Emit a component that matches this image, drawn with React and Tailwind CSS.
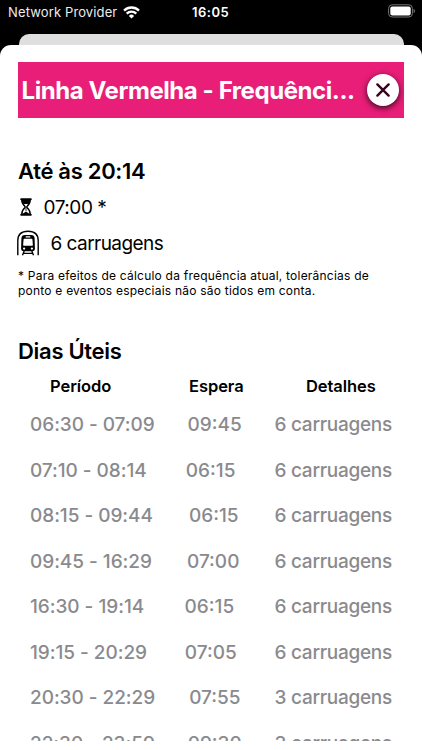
import React from 'react';

const rows = [
  ['06:30 - 07:09', '09:45', '6 carruagens'],
  ['07:10 - 08:14', '06:15', '6 carruagens'],
  ['08:15 - 09:44', '06:15', '6 carruagens'],
  ['09:45 - 16:29', '07:00', '6 carruagens'],
  ['16:30 - 19:14', '06:15', '6 carruagens'],
  ['19:15 - 20:29', '07:05', '6 carruagens'],
  ['20:30 - 22:29', '07:55', '3 carruagens'],
  ['22:30 - 23:59', '09:30', '3 carruagens'],
];

function Wifi() {
  return (
    <svg width="17" height="13" viewBox="0 0 17 13" fill="none" stroke="white" strokeWidth="2.3">
      <path d="M1 4.6A10.6 10.6 0 0 1 16 4.6" />
      <path d="M3.7 7.6A6.8 6.8 0 0 1 13.3 7.6" />
      <path d="M8.5 12.4L5.9 9.9A3.7 3.7 0 0 1 11.1 9.9Z" fill="white" stroke="none" />
    </svg>
  );
}

function Battery() {
  return (
    <svg width="28" height="14" viewBox="0 0 28 14">
      <rect x=".6" y=".8" width="23.8" height="12.2" rx="3.6" fill="none" stroke="#777" strokeWidth="1" />
      <rect x="2.3" y="2.4" width="20.4" height="9" rx="2" fill="white" />
      <path d="M25.6 4.8Q27 5.5 27 7T25.6 9.2Z" fill="#777" />
    </svg>
  );
}

function Hourglass() {
  return (
    <svg width="12" height="18" viewBox="0 0 12 18" fill="none" stroke="black" strokeLinecap="round" strokeLinejoin="round">
      <path d="M1.2 1.3H10.8M1.2 16.7H10.8" strokeWidth="2" />
      <path d="M1.8 1.5C1.8 5 2.6 6.2 4.8 8.2Q5.5 9 4.8 9.8C2.6 11.8 1.8 13 1.8 16.3M10.2 1.5C10.2 5 9.4 6.2 7.2 8.2Q6.5 9 7.2 9.8C9.4 11.8 10.2 13 10.2 16.3" strokeWidth="1.5" />
      <path d="M1.8 1.5H10.2L9.3 6H2.7Z" fill="black" stroke="none" />
      <path d="M2.4 16.5C3.2 15 4.8 14.4 6 13.7C7.2 14.4 8.8 15 9.6 16.5Z" fill="black" stroke="none" />
      <path d="M6 9V13" strokeWidth=".8" />
    </svg>
  );
}

function TrainTunnel() {
  return (
    <svg width="22" height="26" viewBox="0 0 22 26" fill="none" stroke="black">
      <path d="M.8 25.3V10.5C.8 4 4.4 1.2 11 1.2S21.2 4 21.2 10.5V25.3" strokeWidth="1.4" />
      <path d="M8 5H14C16.5 5 17.5 6.2 17.6 8.4L17.9 18.6C17.9 20.4 17 21.3 15.2 21.3H6.8C5 21.3 4.1 20.4 4.1 18.6L4.4 8.4C4.5 6.2 5.5 5 8 5Z" fill="black" stroke="none" />
      <path d="M9.1 6.9H12.9" stroke="white" strokeWidth="1.1" strokeLinecap="round" />
      <path d="M7.4 8.7H14.6Q15.3 8.7 15.4 9.5L15.9 15Q15.9 15.8 15.1 15.8H6.9Q6.1 15.8 6.1 15L6.6 9.5Q6.7 8.7 7.4 8.7Z" fill="white" stroke="none" />
      <circle cx="7.1" cy="18.6" r="1.15" fill="white" stroke="none" />
      <circle cx="14.9" cy="18.6" r="1.15" fill="white" stroke="none" />
      <path d="M7.2 21L5.5 25.3M14.8 21L16.5 25.3M6.4 23.4H15.6" strokeWidth="1.4" />
    </svg>
  );
}

export default function App() {
  return (
    <div className="flex h-[750px] w-[422px] flex-col overflow-hidden bg-white font-['Inter','Liberation_Sans',sans-serif] text-black">
      <div className="flex h-[741px] flex-col overflow-hidden bg-black">
        <div className="grid h-[34px] shrink-0 grid-cols-[184px_1fr_auto] items-start pt-1 pl-2 pr-[6px] text-white">
          <div className="flex h-4 items-center gap-[6px] whitespace-nowrap text-[13px] leading-4 text-[#ededed]">
            <span className="tracking-[0.13px]">Network Provider</span>
            <Wifi />
          </div>
          <span className="text-[13px] font-semibold leading-4 tracking-[0.5px]">16:05</span>
          <Battery />
        </div>
        <div className="mx-[18.5px] h-[11px] shrink-0 rounded-t-[10px] bg-[#dfdfe0]" />
        <main className="flex flex-1 flex-col rounded-t-[11px] bg-white px-[18px] pt-[17px]">
          <header className="flex h-[56px] shrink-0 items-center justify-between bg-[#e91e78] pl-[3.5px] pr-[5px] text-white">
            <h1 className="whitespace-nowrap pt-[2px] text-[24px] font-bold leading-7 tracking-[-0.43px]">Linha Vermelha - Frequênci...</h1>
            <button className="flex size-8 shrink-0 items-center justify-center rounded-full bg-white shadow-[0_2px_6px_rgba(0,0,0,0.8)]">
              <svg width="14" height="14" viewBox="0 0 14 14" stroke="#35051c" strokeWidth="2.4" strokeLinecap="round">
                <path d="M1.4 1.4L12.6 12.6M12.6 1.4L1.4 12.6" />
              </svg>
            </button>
          </header>
          <h2 className="mt-[39px] h-7 whitespace-nowrap text-[22px] font-semibold leading-7 tracking-[-0.3px]">Até às 20:14</h2>
          <div className="mt-[10px] flex h-6 items-center gap-[11.5px] pl-[2px] text-[19px] leading-6">
            <Hourglass />
            <span className="pt-[2px] tracking-[-0.45px]">07:00 *</span>
          </div>
          <div className="-ml-px mt-[12px] flex h-6 items-center gap-[11.5px] text-[19px] leading-6">
            <TrainTunnel />
            <span className="pt-[2px] tracking-[-0.55px]">6 carruagens</span>
          </div>
          <div className="mt-[13px] whitespace-nowrap text-[12px] leading-[15px] tracking-[0.22px]">
            <p>* Para efeitos de cálculo da frequência atual, tolerâncias de</p>
            <p>ponto e eventos especiais não são tidos em conta.</p>
          </div>
          <h2 className="mt-[39px] h-7 text-[22px] font-semibold leading-7 tracking-[-0.3px]">Dias Úteis</h2>
          <section className="flex flex-col">
            <div className="mt-[9px] flex h-6 text-[16.5px] font-semibold leading-6 tracking-[-0.07px]">
              <span className="w-[139px] pl-8">Período</span>
              <span className="w-[117px] pl-8">Espera</span>
              <span className="whitespace-nowrap pl-8">Detalhes</span>
            </div>
            <div className="mt-[4.5px] flex flex-col">
              {rows.map(([time, wait, details]) => (
                <div key={time} className="flex h-[45.5px] shrink-0 items-center justify-between px-3 text-[19px] font-medium leading-6 text-[#8a8a8e]">
                  <span className="tracking-[-0.04px]">{time}</span>
                  <span>{wait}</span>
                  <span className="tracking-[-0.27px]">{details}</span>
                </div>
              ))}
            </div>
          </section>
        </main>
      </div>
    </div>
  );
}
